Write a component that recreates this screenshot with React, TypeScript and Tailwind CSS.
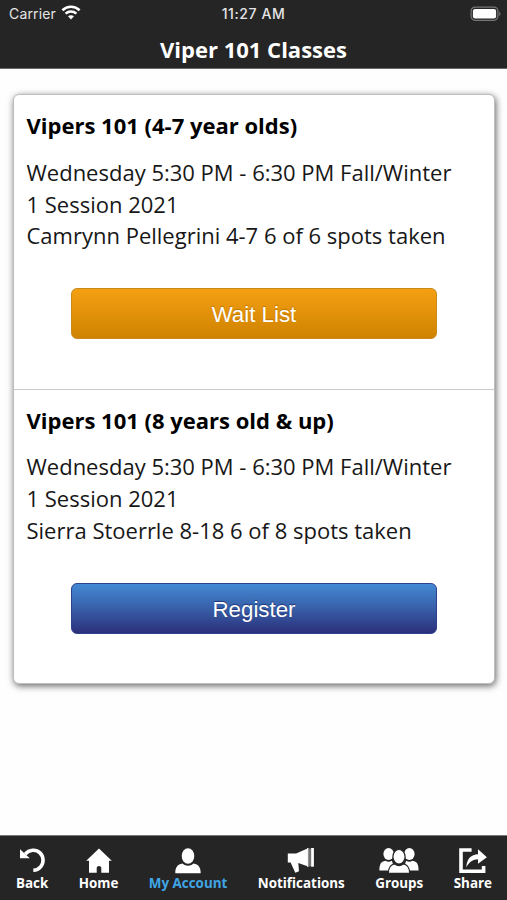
import type { ReactNode } from "react";

type ClassInfo = {
  title: string;
  lines: string[];
  action: string;
  kind: "wait" | "register";
};

const classes: ClassInfo[] = [
  {
    title: "Vipers 101 (4-7 year olds)",
    lines: ["Wednesday 5:30 PM - 6:30 PM Fall/Winter", "1 Session 2021", "Camrynn Pellegrini 4-7 6 of 6 spots taken"],
    action: "Wait List",
    kind: "wait",
  },
  {
    title: "Vipers 101 (8 years old & up)",
    lines: ["Wednesday 5:30 PM - 6:30 PM Fall/Winter", "1 Session 2021", "Sierra Stoerrle 8-18 6 of 8 spots taken"],
    action: "Register",
    kind: "register",
  },
];

const buttonStyles = {
  wait: "border-[#c98a1b] bg-linear-to-b from-[#f5a013] to-[#cf8300] [text-shadow:0_-1px_1px_rgba(150,90,0,0.5)]",
  register:
    "border-[#2f418b] bg-linear-to-b from-[#4389d3] via-[#3964ad] via-45% to-[#2b2f7b] [text-shadow:0_-1px_1px_rgba(20,30,90,0.7)]",
};

function WifiIcon() {
  return (
    <svg width="20" height="15" viewBox="0 0 20 15" fill="none" stroke="#fff" strokeWidth="2.6" className="ml-[5px] -translate-y-px">
      <path d="M1.4 5.2C6.3.6 13.7.6 18.6 5.2" />
      <path d="M4.6 8.6c3.1-2.8 7.7-2.8 10.8 0" />
      <path d="M10 14.4 7 11.3c1.7-1.5 4.3-1.5 6 0Z" fill="#fff" stroke="none" />
    </svg>
  );
}

function BatteryIcon() {
  return (
    <svg width="31" height="16" viewBox="0 0 31 16">
      <rect x="1.1" y="1.1" width="26.8" height="13.2" rx="4" fill="none" stroke="#777" strokeWidth="1.2" />
      <rect x="2.9" y="2.9" width="23.2" height="9.6" rx="2.2" fill="#fff" />
      <path d="M29.2 5.4c1.7.8 1.7 3.8 0 4.6Z" fill="#777" />
    </svg>
  );
}

function Person() {
  return (
    <>
      <ellipse cx="20" cy="9" rx="6.3" ry="7.8" />
      <path d="M7.3 26.3c0-6.2 2.2-8.7 7.2-9.7 3.3 2.9 7.7 2.9 11 0 5 1 7.2 3.5 7.2 9.7Z" />
    </>
  );
}

const tabs: { label: string; active?: boolean; icon: ReactNode }[] = [
  {
    label: "Back",
    icon: (
      <>
        <path d="M8 2.2 17.8 11.3 8 11.3Z" />
        <path d="M13.2 7.1C17.2 2.4 24 2 28 5.9c3.9 3.8 4 10 .6 14-1.9 2.2-4.4 3.3-7.3 3.4" fill="none" stroke="#fff" strokeWidth="3.6" />
      </>
    ),
  },
  {
    label: "Home",
    icon: <path d="M20 1.5 32.8 13.7H30v12.1h-7.7v-4.6c0-3-4.6-3-4.6 0v4.6H10V13.7H7.2Z" />,
  },
  { label: "My Account", active: true, icon: <Person /> },
  {
    label: "Notifications",
    icon: (
      <>
        <path d="M6.8 6.5h8.3L26.5 1.6v17.6l-9.2-3.3.7 8.3-3.7 1.5-4.7-10.3H6.8Z" />
        <path d="M26.8 1v18.7" stroke="#fff" strokeWidth="1.4" />
        <path d="M29 1.4v18" stroke="#888" strokeWidth="1.6" />
        <path d="M31.5 1v18.7" stroke="#fff" strokeWidth="2.8" />
      </>
    ),
  },
  {
    label: "Groups",
    icon: (
      <>
        <ellipse cx="9.6" cy="7" rx="5.2" ry="5.9" />
        <ellipse cx="30.4" cy="7" rx="5.2" ry="5.9" />
        <path d="M.4 23.5c0-6.2 1.5-9 6-9.8 2.2 1.6 4.6 1.5 6.5 0l3 9.8ZM39.6 23.5c0-6.2-1.5-9-6-9.8-2.2 1.6-4.6 1.5-6.5 0l-3 9.8Z" />
        <g stroke="#252525" strokeWidth="1.2">
          <ellipse cx="20" cy="9.8" rx="6.1" ry="7.3" />
          <path d="M9.3 26.4c0-6 1.7-8.7 6.2-9.6 2.8 2.2 6.2 2.2 9 0 4.5.9 6.2 3.6 6.2 9.6Z" />
        </g>
      </>
    ),
  },
  {
    label: "Share",
    icon: (
      <>
        <path d="M18.6 3H8v21.2h22.6v-5.2" fill="none" stroke="#fff" strokeWidth="3.6" />
        <path d="M13.3 20.2C14 11.4 18.1 7.7 25 7.3V2.2l8.9 8-8.9 6.6v-4.6c-5.3.1-8.4 2.6-11.7 8Z" />
      </>
    ),
  },
];

function ClassCard({ info }: { info: ClassInfo }) {
  return (
    <section className="h-[294.5px] border-b border-[#c9c9c9] px-[12px] pt-[15px] last:h-[293px] last:border-b-0">
      <h2 className="pl-[0.5px] whitespace-nowrap text-[22px] leading-[30px] font-bold text-black">{info.title}</h2>
      <div className="mt-[16.8px] pl-[0.5px] text-[22px] leading-[31.8px] whitespace-nowrap text-[#171717]">
        {info.lines.map((line) => (
          <p key={line}>{line}</p>
        ))}
      </div>
      <button
        className={`mx-auto mt-[36px] block h-[51px] w-[366px] rounded-[6px] border pt-px font-['Liberation_Sans',sans-serif] text-[22.3px] leading-[50px] text-white ${buttonStyles[info.kind]}`}
      >
        {info.action}
      </button>
    </section>
  );
}

export default function App() {
  return (
    <div className="flex h-[900px] w-[507px] flex-col overflow-hidden bg-[#fefefe] font-['Open_Sans',sans-serif]">
      <header className="h-[69px] shrink-0 border-b border-[#696969] bg-[#252525] text-white">
        <div className="grid h-[28px] grid-cols-3 items-center px-[9px] font-[Inter,sans-serif] text-[14px] text-[#e5e5e5]">
          <div className="flex -translate-y-px items-center">
            <span className="tracking-[0.15px]">Carrier</span>
            <WifiIcon />
          </div>
          <span className="-translate-y-px text-center text-[14px] font-medium tracking-[0.6px]">11:27 AM</span>
          <div className="flex translate-x-[3px] justify-end">
            <BatteryIcon />
          </div>
        </div>
        <h1 className="text-center text-[22px] leading-[42px] font-bold">Viper 101 Classes</h1>
      </header>

      <main className="flex-1 pt-[25px] pl-[13px]">
        <div className="h-[590px] w-[482px] rounded-[6px] border border-[#bdbdbd] bg-white shadow-[1px_2px_7px_rgba(0,0,0,0.6)]">
          {classes.map((info) => (
            <ClassCard key={info.title} info={info} />
          ))}
        </div>
      </main>

      <nav className="flex h-[65px] shrink-0 justify-between border-t border-[#777] bg-[#252525] pr-[15px] pl-[16px]">
        {tabs.map((tab) => (
          <a key={tab.label} className={`flex flex-col items-center ${tab.active ? "text-[#40a5e5]" : "text-white"}`}>
            <svg width="40" height="27" viewBox="0 0 40 27" fill="#fff" className="-mx-2 mt-[11px] shrink-0">
              {tab.icon}
            </svg>
            <span className="text-[13.4px] leading-[18px] font-bold">{tab.label}</span>
          </a>
        ))}
      </nav>
    </div>
  );
}
